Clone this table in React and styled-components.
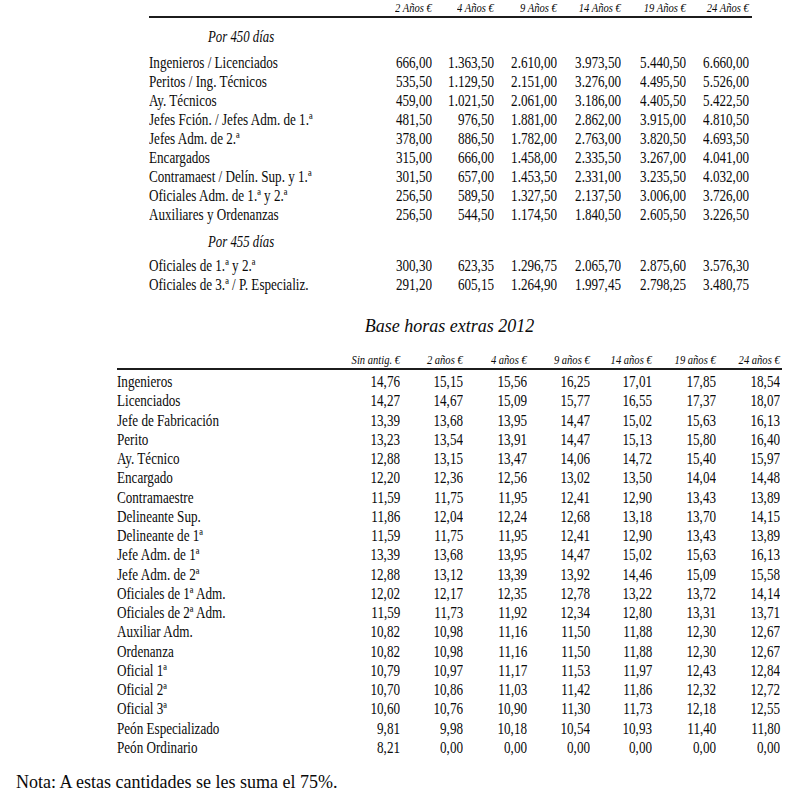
import React from 'react';
import styled, { createGlobalStyle } from 'styled-components';

const GlobalStyle = createGlobalStyle`
  html, body {
    margin: 0;
    padding: 0;
    background: #fff;
  }
  body {
    font-family: "Liberation Serif", "Times New Roman", serif;
    color: #0a0a0a;
  }
`;

const Page = styled.div`
  width: 797px;
  height: 803px;
  display: flex;
  flex-direction: column;
  overflow: hidden;
`;

const Table = styled.div`
  margin-left: ${(p) => p.left}px;
  width: ${(p) => p.width}px;
  display: flex;
  flex-direction: column;
`;

const Row = styled.div`
  display: grid;
  grid-template-columns: ${(p) => p.cols};
  padding-right: ${(p) => p.padRight}px;
  height: ${(p) => p.h}px;
  line-height: ${(p) => p.h}px;
  font-size: 16px;
  white-space: nowrap;
`;

const HeadRow = styled(Row)`
  font-size: 12px;
  font-style: italic;
  height: 16px;
  line-height: 16px;
  border-bottom: 2px solid #1c1c1c;
  margin-top: ${(p) => p.top || 0}px;
  margin-bottom: ${(p) => p.bottom || 0}px;
`;

const Cell = styled.div`
  text-align: ${(p) => (p.num ? 'right' : 'left')};
  overflow: visible;
`;

// scanned table text is horizontally condensed
const Squeeze = styled.span`
  display: inline-block;
  transform: scaleX(${(p) => p.k || 0.82});
  transform-origin: ${(p) => (p.num ? 'right' : 'left')} center;
`;

const Section = styled.div`
  font-style: italic;
  font-size: 16px;
  height: 19px;
  line-height: 19px;
  padding-left: 59px;
  margin-top: ${(p) => p.top}px;
  margin-bottom: ${(p) => p.bottom}px;
  white-space: nowrap;
`;

const Title = styled.div`
  margin-left: 117px;
  width: 665px;
  margin-top: 21px;
  text-align: center;
  font-style: italic;
  font-size: 18px;
  line-height: 22px;
`;

const Note = styled.div`
  margin-left: 16px;
  margin-top: 14px;
  font-size: 18px;
  line-height: 22px;
  white-space: nowrap;
`;

const topCols = '221px 62px 62px 63px 64px 65px 63px';
const extCols = '223px 60px 63px 64px 63px 62px 64px 64px';

const topHead = ['2 Años €', '4 Años €', '9 Años €', '14 Años €', '19 Años €', '24 Años €'];

const days450 = [
  ['Ingenieros / Licenciados', '666,00', '1.363,50', '2.610,00', '3.973,50', '5.440,50', '6.660,00'],
  ['Peritos / Ing. Técnicos', '535,50', '1.129,50', '2.151,00', '3.276,00', '4.495,50', '5.526,00'],
  ['Ay. Técnicos', '459,00', '1.021,50', '2.061,00', '3.186,00', '4.405,50', '5.422,50'],
  ['Jefes Fción. / Jefes Adm. de 1.ª', '481,50', '976,50', '1.881,00', '2.862,00', '3.915,00', '4.810,50'],
  ['Jefes Adm. de 2.ª', '378,00', '886,50', '1.782,00', '2.763,00', '3.820,50', '4.693,50'],
  ['Encargados', '315,00', '666,00', '1.458,00', '2.335,50', '3.267,00', '4.041,00'],
  ['Contramaest / Delín. Sup. y 1.ª', '301,50', '657,00', '1.453,50', '2.331,00', '3.235,50', '4.032,00'],
  ['Oficiales Adm. de 1.ª y 2.ª', '256,50', '589,50', '1.327,50', '2.137,50', '3.006,00', '3.726,00'],
  ['Auxiliares y Ordenanzas', '256,50', '544,50', '1.174,50', '1.840,50', '2.605,50', '3.226,50'],
];

const days455 = [
  ['Oficiales de 1.ª y 2.ª', '300,30', '623,35', '1.296,75', '2.065,70', '2.875,60', '3.576,30'],
  ['Oficiales de 3.ª / P. Especializ.', '291,20', '605,15', '1.264,90', '1.997,45', '2.798,25', '3.480,75'],
];

const extHead = ['Sin antig. €', '2 años €', '4 años €', '9 años €', '14 años €', '19 años €', '24 años €'];

const extras = [
  ['Ingenieros', '14,76', '15,15', '15,56', '16,25', '17,01', '17,85', '18,54'],
  ['Licenciados', '14,27', '14,67', '15,09', '15,77', '16,55', '17,37', '18,07'],
  ['Jefe de Fabricación', '13,39', '13,68', '13,95', '14,47', '15,02', '15,63', '16,13'],
  ['Perito', '13,23', '13,54', '13,91', '14,47', '15,13', '15,80', '16,40'],
  ['Ay. Técnico', '12,88', '13,15', '13,47', '14,06', '14,72', '15,40', '15,97'],
  ['Encargado', '12,20', '12,36', '12,56', '13,02', '13,50', '14,04', '14,48'],
  ['Contramaestre', '11,59', '11,75', '11,95', '12,41', '12,90', '13,43', '13,89'],
  ['Delineante Sup.', '11,86', '12,04', '12,24', '12,68', '13,18', '13,70', '14,15'],
  ['Delineante de 1ª', '11,59', '11,75', '11,95', '12,41', '12,90', '13,43', '13,89'],
  ['Jefe Adm. de 1ª', '13,39', '13,68', '13,95', '14,47', '15,02', '15,63', '16,13'],
  ['Jefe Adm. de 2ª', '12,88', '13,12', '13,39', '13,92', '14,46', '15,09', '15,58'],
  ['Oficiales de 1ª Adm.', '12,02', '12,17', '12,35', '12,78', '13,22', '13,72', '14,14'],
  ['Oficiales de 2ª Adm.', '11,59', '11,73', '11,92', '12,34', '12,80', '13,31', '13,71'],
  ['Auxiliar Adm.', '10,82', '10,98', '11,16', '11,50', '11,88', '12,30', '12,67'],
  ['Ordenanza', '10,82', '10,98', '11,16', '11,50', '11,88', '12,30', '12,67'],
  ['Oficial 1ª', '10,79', '10,97', '11,17', '11,53', '11,97', '12,43', '12,84'],
  ['Oficial 2ª', '10,70', '10,86', '11,03', '11,42', '11,86', '12,32', '12,72'],
  ['Oficial 3ª', '10,60', '10,76', '10,90', '11,30', '11,73', '12,18', '12,55'],
  ['Peón Especializado', '9,81', '9,98', '10,18', '10,54', '10,93', '11,40', '11,80'],
  ['Peón Ordinario', '8,21', '0,00', '0,00', '0,00', '0,00', '0,00', '0,00'],
];

function DataRow({ cells, cols, padRight, h }) {
  return (
    <Row cols={cols} padRight={padRight} h={h}>
      {cells.map((c, i) => (
        <Cell key={i} num={i > 0}>
          <Squeeze num={i > 0}>{c}</Squeeze>
        </Cell>
      ))}
    </Row>
  );
}

function HeaderRow({ labels, cols, padRight, top, bottom }) {
  return (
    <HeadRow cols={cols} padRight={padRight} h={16} top={top} bottom={bottom}>
      <Cell />
      {labels.map((l) => (
        <Cell key={l} num>
          <Squeeze num k={0.88}>{l}</Squeeze>
        </Cell>
      ))}
    </HeadRow>
  );
}

export default function App() {
  return (
    <Page>
      <GlobalStyle />

      <Table left={149} width={603}>
        <HeaderRow labels={topHead} cols={topCols} padRight={3} />
        <Section top={9} bottom={7}>
          <Squeeze k={0.8}>Por 450 días</Squeeze>
        </Section>
        {days450.map((r) => (
          <DataRow key={r[0]} cells={r} cols={topCols} padRight={3} h={19} />
        ))}
        <Section top={8} bottom={5}>
          <Squeeze k={0.8}>Por 455 días</Squeeze>
        </Section>
        {days455.map((r) => (
          <DataRow key={r[0]} cells={r} cols={topCols} padRight={3} h={19} />
        ))}
      </Table>

      <Title>Base horas extras 2012</Title>

      <Table left={117} width={665}>
        <HeaderRow labels={extHead} cols={extCols} padRight={2} top={15} bottom={2} />
        {extras.map((r) => (
          <DataRow key={r[0]} cells={r} cols={extCols} padRight={2} h={19.25} />
        ))}
      </Table>

      <Note>Nota: A estas cantidades se les suma el 75%.</Note>
    </Page>
  );
}
